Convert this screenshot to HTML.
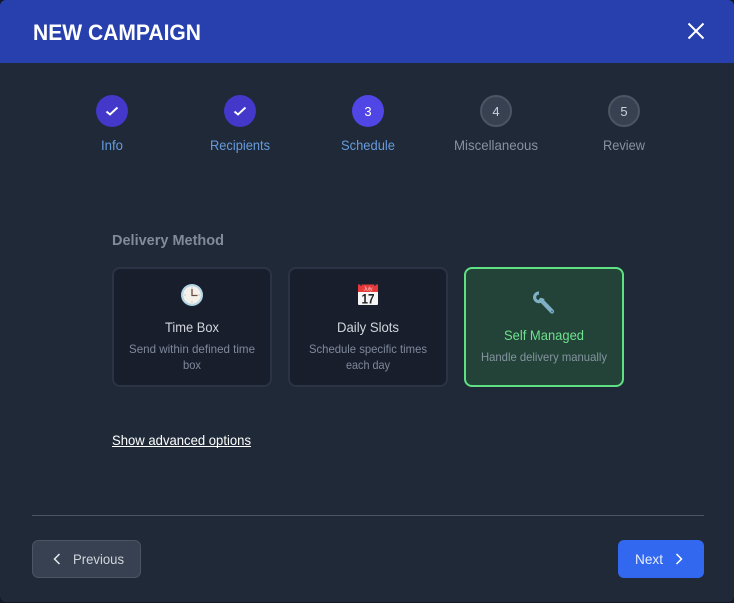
<!DOCTYPE html>
<html lang="en"><head><meta charset="utf-8"><title>New Campaign</title>
<style>
html,body{margin:0;padding:0;width:734px;height:603px;overflow:hidden;background:#111827}
svg{display:block}
text{font-family:"Liberation Sans",sans-serif}
</style></head>
<body>
<svg width="734" height="603" viewBox="0 0 734 603" xmlns="http://www.w3.org/2000/svg">
<rect width="734" height="603" fill="#111827"/>
<rect x="0" y="0" width="734" height="602" rx="6" fill="#1f2937"/>
<path d="M0 63V6a6 6 0 0 1 6-6H728a6 6 0 0 1 6 6V63Z" fill="#2740ae"/>
<text x="33" y="40" font-size="22" font-weight="700" fill="#fff" textLength="168" lengthAdjust="spacingAndGlyphs">NEW CAMPAIGN</text>
<path d="M688.500 23.500L703.500 38.500M703.500 23.500L688.500 38.500" stroke="#fff" stroke-width="2" fill="none"/>

<circle cx="112" cy="111" r="16" fill="#4338ca"/>
<path d="M106.500 111.500L110 114.500L117.500 107.500" stroke="#fff" stroke-width="1.900" fill="none"/>
<circle cx="240" cy="111" r="16" fill="#4338ca"/>
<path d="M234.500 111.500L238 114.500L245.500 107.500" stroke="#fff" stroke-width="1.900" fill="none"/>
<circle cx="368" cy="111" r="16" fill="#4f46e5"/>
<text x="368" y="116" font-size="13" fill="#fff" text-anchor="middle">3</text>
<circle cx="496" cy="111" r="15" fill="#374151" stroke="#4b5563" stroke-width="2"/>
<text x="496" y="116" font-size="13" fill="#cbd2dc" text-anchor="middle">4</text>
<circle cx="624" cy="111" r="15" fill="#374151" stroke="#4b5563" stroke-width="2"/>
<text x="624" y="116" font-size="13" fill="#cbd2dc" text-anchor="middle">5</text>

<text x="101" y="150" font-size="14" fill="#669bdc" textLength="22" lengthAdjust="spacingAndGlyphs">Info</text>
<text x="210" y="150" font-size="14" fill="#669bdc" textLength="60" lengthAdjust="spacingAndGlyphs">Recipients</text>
<text x="341" y="150" font-size="14" fill="#669bdc" textLength="54" lengthAdjust="spacingAndGlyphs">Schedule</text>
<text x="454" y="150" font-size="14" fill="#8791a1" textLength="84" lengthAdjust="spacingAndGlyphs">Miscellaneous</text>
<text x="603" y="150" font-size="14" fill="#8791a1" textLength="42" lengthAdjust="spacingAndGlyphs">Review</text>

<text x="112" y="245" font-size="14.500" font-weight="700" fill="#818b9b" textLength="112" lengthAdjust="spacingAndGlyphs">Delivery Method</text>

<rect x="113" y="268" width="158" height="118" rx="7" fill="#191e2d" stroke="#2b3444" stroke-width="2"/>
<rect x="289" y="268" width="158" height="118" rx="7" fill="#191e2d" stroke="#2b3444" stroke-width="2"/>
<rect x="465" y="268" width="158" height="118" rx="7" fill="#234338" stroke="#5fe083" stroke-width="2"/>

<circle cx="192" cy="295" r="11" fill="#b5d6e4"/>
<circle cx="192" cy="295" r="8.800" fill="#f3f1ea"/>
<path d="M192 287.500V288.500M192 301.500V302.500M184.500 295H185.500M198.500 295H199.500" stroke="#aaa" stroke-width="1" fill="none"/>
<path d="M192 289V295.500H197.500" stroke="#6b4a44" stroke-width="1.300" fill="none"/>

<rect x="358" y="284.500" width="20" height="20.500" rx="1" fill="#f5f5f5"/>
<rect x="358" y="284.500" width="20" height="7.500" fill="#e5393a"/>
<text x="368" y="290.500" font-size="5" fill="#fcdcdc" text-anchor="middle">July</text>
<text x="368" y="303.500" font-size="13.500" font-weight="700" fill="#222" text-anchor="middle" textLength="13" lengthAdjust="spacingAndGlyphs">17</text>
<circle cx="361" cy="285" r="1" fill="#333"/><circle cx="375" cy="285" r="1" fill="#333"/>

<path d="M541 300L552 311.500" stroke="#7fb0c6" stroke-width="4.200" stroke-linecap="round" fill="none"/>
<path d="M539 293A4.300 4.300 0 1 0 543 298.500" stroke="#7fb0c6" stroke-width="3.200" fill="none"/>
<circle cx="552" cy="311.500" r="1" fill="#3f6f86"/>

<text x="165" y="332" font-size="14" fill="#d1d5db" textLength="54" lengthAdjust="spacingAndGlyphs">Time Box</text>
<text x="129" y="353" font-size="12" fill="#7e899a" textLength="126" lengthAdjust="spacingAndGlyphs">Send within defined time</text>
<text x="183" y="369" font-size="12" fill="#7e899a" textLength="18" lengthAdjust="spacingAndGlyphs">box</text>
<text x="337" y="332" font-size="14" fill="#d1d5db" textLength="62" lengthAdjust="spacingAndGlyphs">Daily Slots</text>
<text x="309" y="353" font-size="12" fill="#7e899a" textLength="118" lengthAdjust="spacingAndGlyphs">Schedule specific times</text>
<text x="346" y="369" font-size="12" fill="#7e899a" textLength="44" lengthAdjust="spacingAndGlyphs">each day</text>
<text x="504" y="340" font-size="14" fill="#6ee08e" textLength="80" lengthAdjust="spacingAndGlyphs">Self Managed</text>
<text x="481" y="361" font-size="12" fill="#8494a0" textLength="126" lengthAdjust="spacingAndGlyphs">Handle delivery manually</text>

<text x="112" y="445" font-size="14" fill="#fff" textLength="139" lengthAdjust="spacingAndGlyphs">Show advanced options</text>
<rect x="112" y="446" width="139" height="1" fill="#fff"/>

<rect x="32" y="515" width="672" height="1" fill="#4b5563"/>

<rect x="32.500" y="540.500" width="108" height="37" rx="6" fill="#374151" stroke="#4b5563"/>
<path d="M59.500 554L54.500 559L59.500 564" stroke="#e5e7eb" stroke-width="1.500" fill="none"/>
<text x="73" y="564" font-size="14" fill="#d1d5db" textLength="51" lengthAdjust="spacingAndGlyphs">Previous</text>

<rect x="618" y="540" width="86" height="38" rx="6" fill="#3168ef"/>
<text x="635" y="564" font-size="14" fill="#e8eeff" textLength="28" lengthAdjust="spacingAndGlyphs">Next</text>
<path d="M676.500 554L681.500 559L676.500 564" stroke="#fff" stroke-width="1.500" fill="none"/>
</svg>
</body></html>
